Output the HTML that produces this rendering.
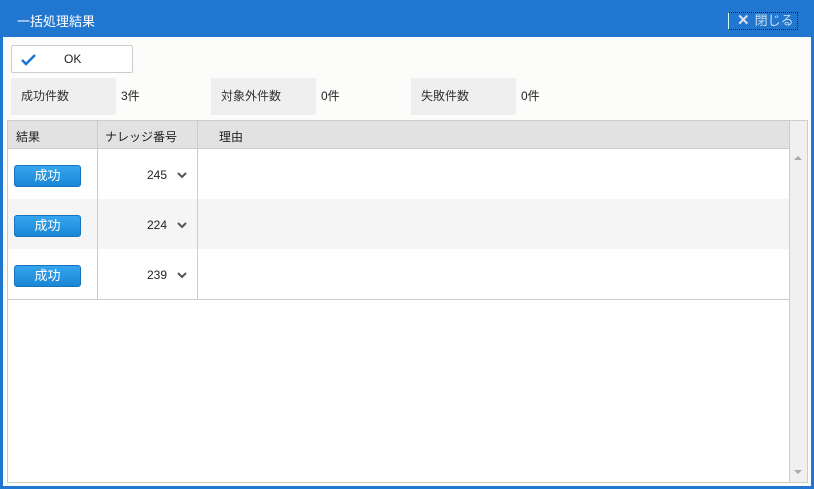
<!DOCTYPE html><html><head><meta charset="utf-8"><style>
*{box-sizing:border-box;margin:0;padding:0}
body{width:814px;height:489px;background:#2176cf;font-family:"Liberation Sans","Noto Sans CJK JP",sans-serif;font-size:12px;color:#222;position:relative;overflow:hidden}
.t{position:absolute;left:17px;top:11px;color:#fff;font-size:13px}
.close{position:absolute;left:728px;top:12px;width:70px;height:18px;border:1px dotted #123;border-left:1px solid #cfe;color:#cde;font-size:13px;padding-left:8px;line-height:16px}
.close b{color:#dde;font-size:15px;margin-right:5px}
.body{position:absolute;left:3px;top:37px;width:808px;height:449px;background:#fcfcfa}
.abs{position:absolute}
.ok{left:8px;top:8px;width:122px;height:28px;border:1px solid #ccc;background:#fff;border-radius:2px}
.lab{top:41px;height:37px;width:105px;background:#efefef;line-height:37px;padding-left:10px;font-size:12px;color:#333}
.val{top:41px;line-height:37px}
.tbl{left:4px;top:83px;width:801px;height:363px;border:1px solid #ccc;background:#fff}
.hd{left:0;top:0;width:799px;height:28px;background:#e2e2e2;border-bottom:1px solid #ccc}
.row{left:0;width:781px;height:50px}
.vl{position:absolute;width:1px;background:#ccc}
.btn{position:absolute;left:6px;width:67px;height:22px;background:linear-gradient(#35a6ee,#1a86d6);border:1px solid #1574bd;border-radius:3px;color:#fff;text-align:center;line-height:20px;font-size:13px}
</style></head><body>
<div class="t">一括処理結果</div>
<div class="close"><b>✕</b>閉じる</div>
<div class="body">
<div class="abs ok"><svg class="abs" style="left:9px;top:8px" width="16" height="12" viewBox="0 0 16 12"><path d="M1 6l4 4 9-9" stroke="#2176cf" stroke-width="2.6" fill="none"/></svg><span class="abs" style="left:52px;top:6px;font-size:12px">OK</span></div>
<div class="abs lab" style="left:8px">成功件数</div><div class="abs val" style="left:118px">3件</div>
<div class="abs lab" style="left:208px">対象外件数</div><div class="abs val" style="left:318px">0件</div>
<div class="abs lab" style="left:408px">失敗件数</div><div class="abs val" style="left:518px">0件</div>
<div class="abs tbl">
<div class="abs hd"><span class="abs" style="left:8px;top:7px">結果</span><span class="abs" style="left:97px;top:7px">ナレッジ番号</span><span class="abs" style="left:211px;top:7px">理由</span></div>
<div class="abs" style="left:781px;top:0;width:18px;height:361px;background:#f0f0f0;border-left:1px solid #ccc"></div>
<div class="abs" style="left:786px;top:35px;width:0;height:0;border:4px solid transparent;border-bottom-color:#aaa;border-top:0"></div>
<div class="abs" style="left:786px;top:349px;width:0;height:0;border:4px solid transparent;border-top-color:#aaa;border-bottom:0"></div>
<div class="abs row" style="top:28px;background:#fff"><div class="btn" style="top:16px">成功</div><span class="abs" style="left:139px;top:19px">245</span></div>
<div class="abs row" style="top:78px;background:#f5f5f5"><div class="btn" style="top:16px">成功</div><span class="abs" style="left:139px;top:19px">224</span></div>
<div class="abs row" style="top:128px;background:#fff;border-bottom:1px solid #ccc;height:51px"><div class="btn" style="top:16px">成功</div><span class="abs" style="left:139px;top:19px">239</span></div>
<svg class="abs" style="left:168px;top:50px" width="12" height="110"><path d="M2 2l4 4 4-4M2 52l4 4 4-4M2 102l4 4 4-4" stroke="#555" stroke-width="2" fill="none"/></svg>
<div class="vl" style="left:89px;top:0;height:179px"></div>
<div class="vl" style="left:189px;top:0;height:179px"></div>
</div>
</div>
</body></html>
